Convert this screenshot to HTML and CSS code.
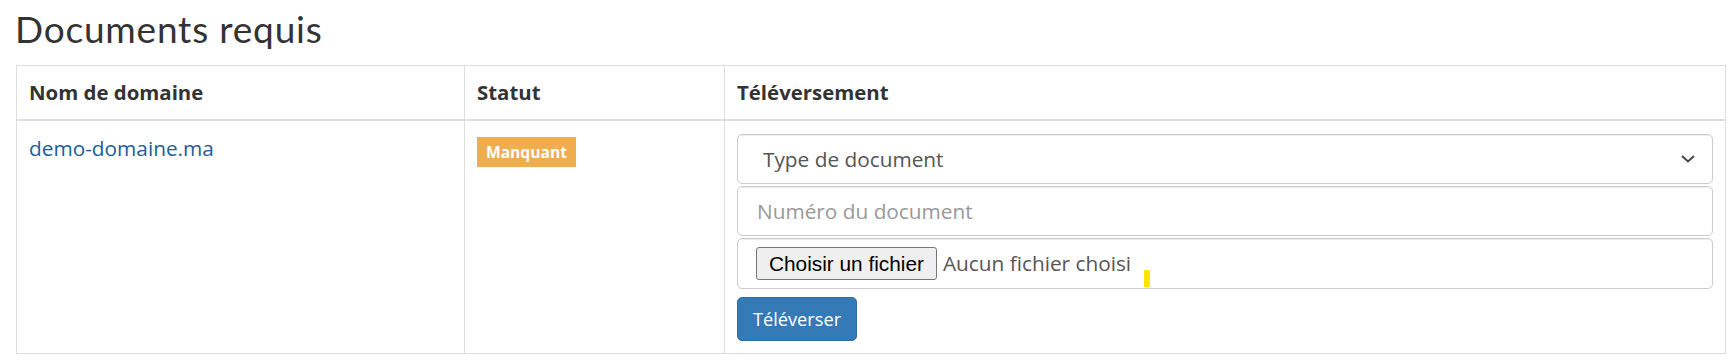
FILE: index.html
```html
<!DOCTYPE html>
<html>
<head>
<title>Documents requis</title>
<link rel="stylesheet" href="styles.css">
</head>
<body>
<div class="page">
  <h2 class="title">Documents requis</h2>

  <table class="docs">
    <colgroup>
      <col class="col-domain">
      <col class="col-status">
      <col>
    </colgroup>
    <thead>
      <tr>
        <th>Nom de domaine</th>
        <th>Statut</th>
        <th>Téléversement</th>
      </tr>
    </thead>
    <tbody>
      <tr>
        <td><a href="#" class="domain">demo-domaine.ma</a></td>
        <td><span class="label-missing">Manquant</span></td>
        <td>
          <form class="upload">
            <div class="select-wrap">
              <select class="field field-select">
                <option>Type de document</option>
              </select>
              <svg class="chevron" width="14" height="8" viewBox="0 0 14 8"><path d="M1 1 L7 6.5 L13 1" fill="none" stroke="#444" stroke-width="2"/></svg>
            </div>
            <input type="text" class="field field-text" placeholder="Numéro du document">
            <div class="field field-file">
              <input type="file" id="doc-file" class="file-hidden">
              <label for="doc-file" class="file-btn">Choisir un fichier</label>
              <span class="file-name">Aucun fichier choisi</span>
              <span class="cursor-mark"></span>
            </div>
            <button type="button" class="btn-upload">Téléverser</button>
          </form>
        </td>
      </tr>
    </tbody>
  </table>
</div>
</body>
</html>
```

FILE: styles.css
```css
body {
  margin: 0;
  font-family: "Open Sans", sans-serif;
  font-size: 20.8px;
  line-height: 1.42857;
  color: #333;
  background: #fff;
}
.page {
  padding: 9px 9px 0 16px;
}
.title {
  margin: 0 0 16px -1px;
  font-family: Lato, "Open Sans", sans-serif;
  font-weight: 400;
  font-size: 37px;
  letter-spacing: 0.8px;
  line-height: 40px;
  color: #333;
}
.docs {
  width: 100%;
  border-collapse: collapse;
  table-layout: fixed;
  border: 1px solid #ddd;
}
.col-domain {
  width: 448px;
}
.col-status {
  width: 260px;
}
.docs th {
  text-align: left;
  font-weight: 700;
  font-size: 20.4px;
  padding: 12px;
  border: 1px solid #ddd;
  border-bottom: 2px solid #ddd;
}
.docs td {
  vertical-align: top;
  padding: 13px 12px 12px;
  border: 1px solid #ddd;
}
.domain {
  color: #1d5e98;
  text-decoration: none;
}
.label-missing {
  display: inline-block;
  margin-top: 3px;
  padding: 0 9px;
  height: 30px;
  line-height: 30px;
  font-size: 15.6px;
  font-weight: 700;
  color: #fff;
  background-color: #f0ad4e;
  vertical-align: top;
}
.upload {
  margin: 0;
}
.field {
  display: block;
  box-sizing: border-box;
  width: 100%;
  height: 50px;
  margin: 0 0 2px;
  border: 1px solid #ccc;
  border-radius: 5px;
  background: #fff;
  box-shadow: inset 0 1px 1px rgba(0,0,0,.075);
  font-family: "Open Sans", sans-serif;
  font-size: 20.8px;
  color: #555;
}
.select-wrap {
  position: relative;
}
.field-select {
  appearance: none;
  -webkit-appearance: none;
  padding: 0 25px;
}
.chevron {
  position: absolute;
  right: 18px;
  top: 21px;
  pointer-events: none;
}
.field-text {
  padding: 0 19px;
  outline: none;
}
.field-text::placeholder {
  color: #999;
}
.field-file {
  position: relative;
  display: flex;
  align-items: center;
  height: 51px;
  padding: 0 18px;
}
.file-hidden {
  display: none;
}
.file-btn {
  box-sizing: border-box;
  height: 33px;
  line-height: 31px;
  padding: 0 12px;
  border: 1px solid #767676;
  border-radius: 3px;
  background: #efefef;
  font-family: "Liberation Sans", Arial, sans-serif;
  font-size: 20.8px;
  color: #000;
  cursor: pointer;
}
.file-name {
  margin-left: 6px;
  color: #555;
}
.cursor-mark {
  position: absolute;
  left: 406px;
  top: 31px;
  width: 6px;
  height: 17px;
  background: #ffe500;
}
.btn-upload {
  display: block;
  margin-top: 8px;
  height: 44px;
  padding: 0 15px;
  border: 1px solid #2e6da4;
  border-radius: 5px;
  background-color: #337ab7;
  color: #fff;
  font-family: "Open Sans", sans-serif;
  font-size: 18.2px;
  cursor: pointer;
}
```
